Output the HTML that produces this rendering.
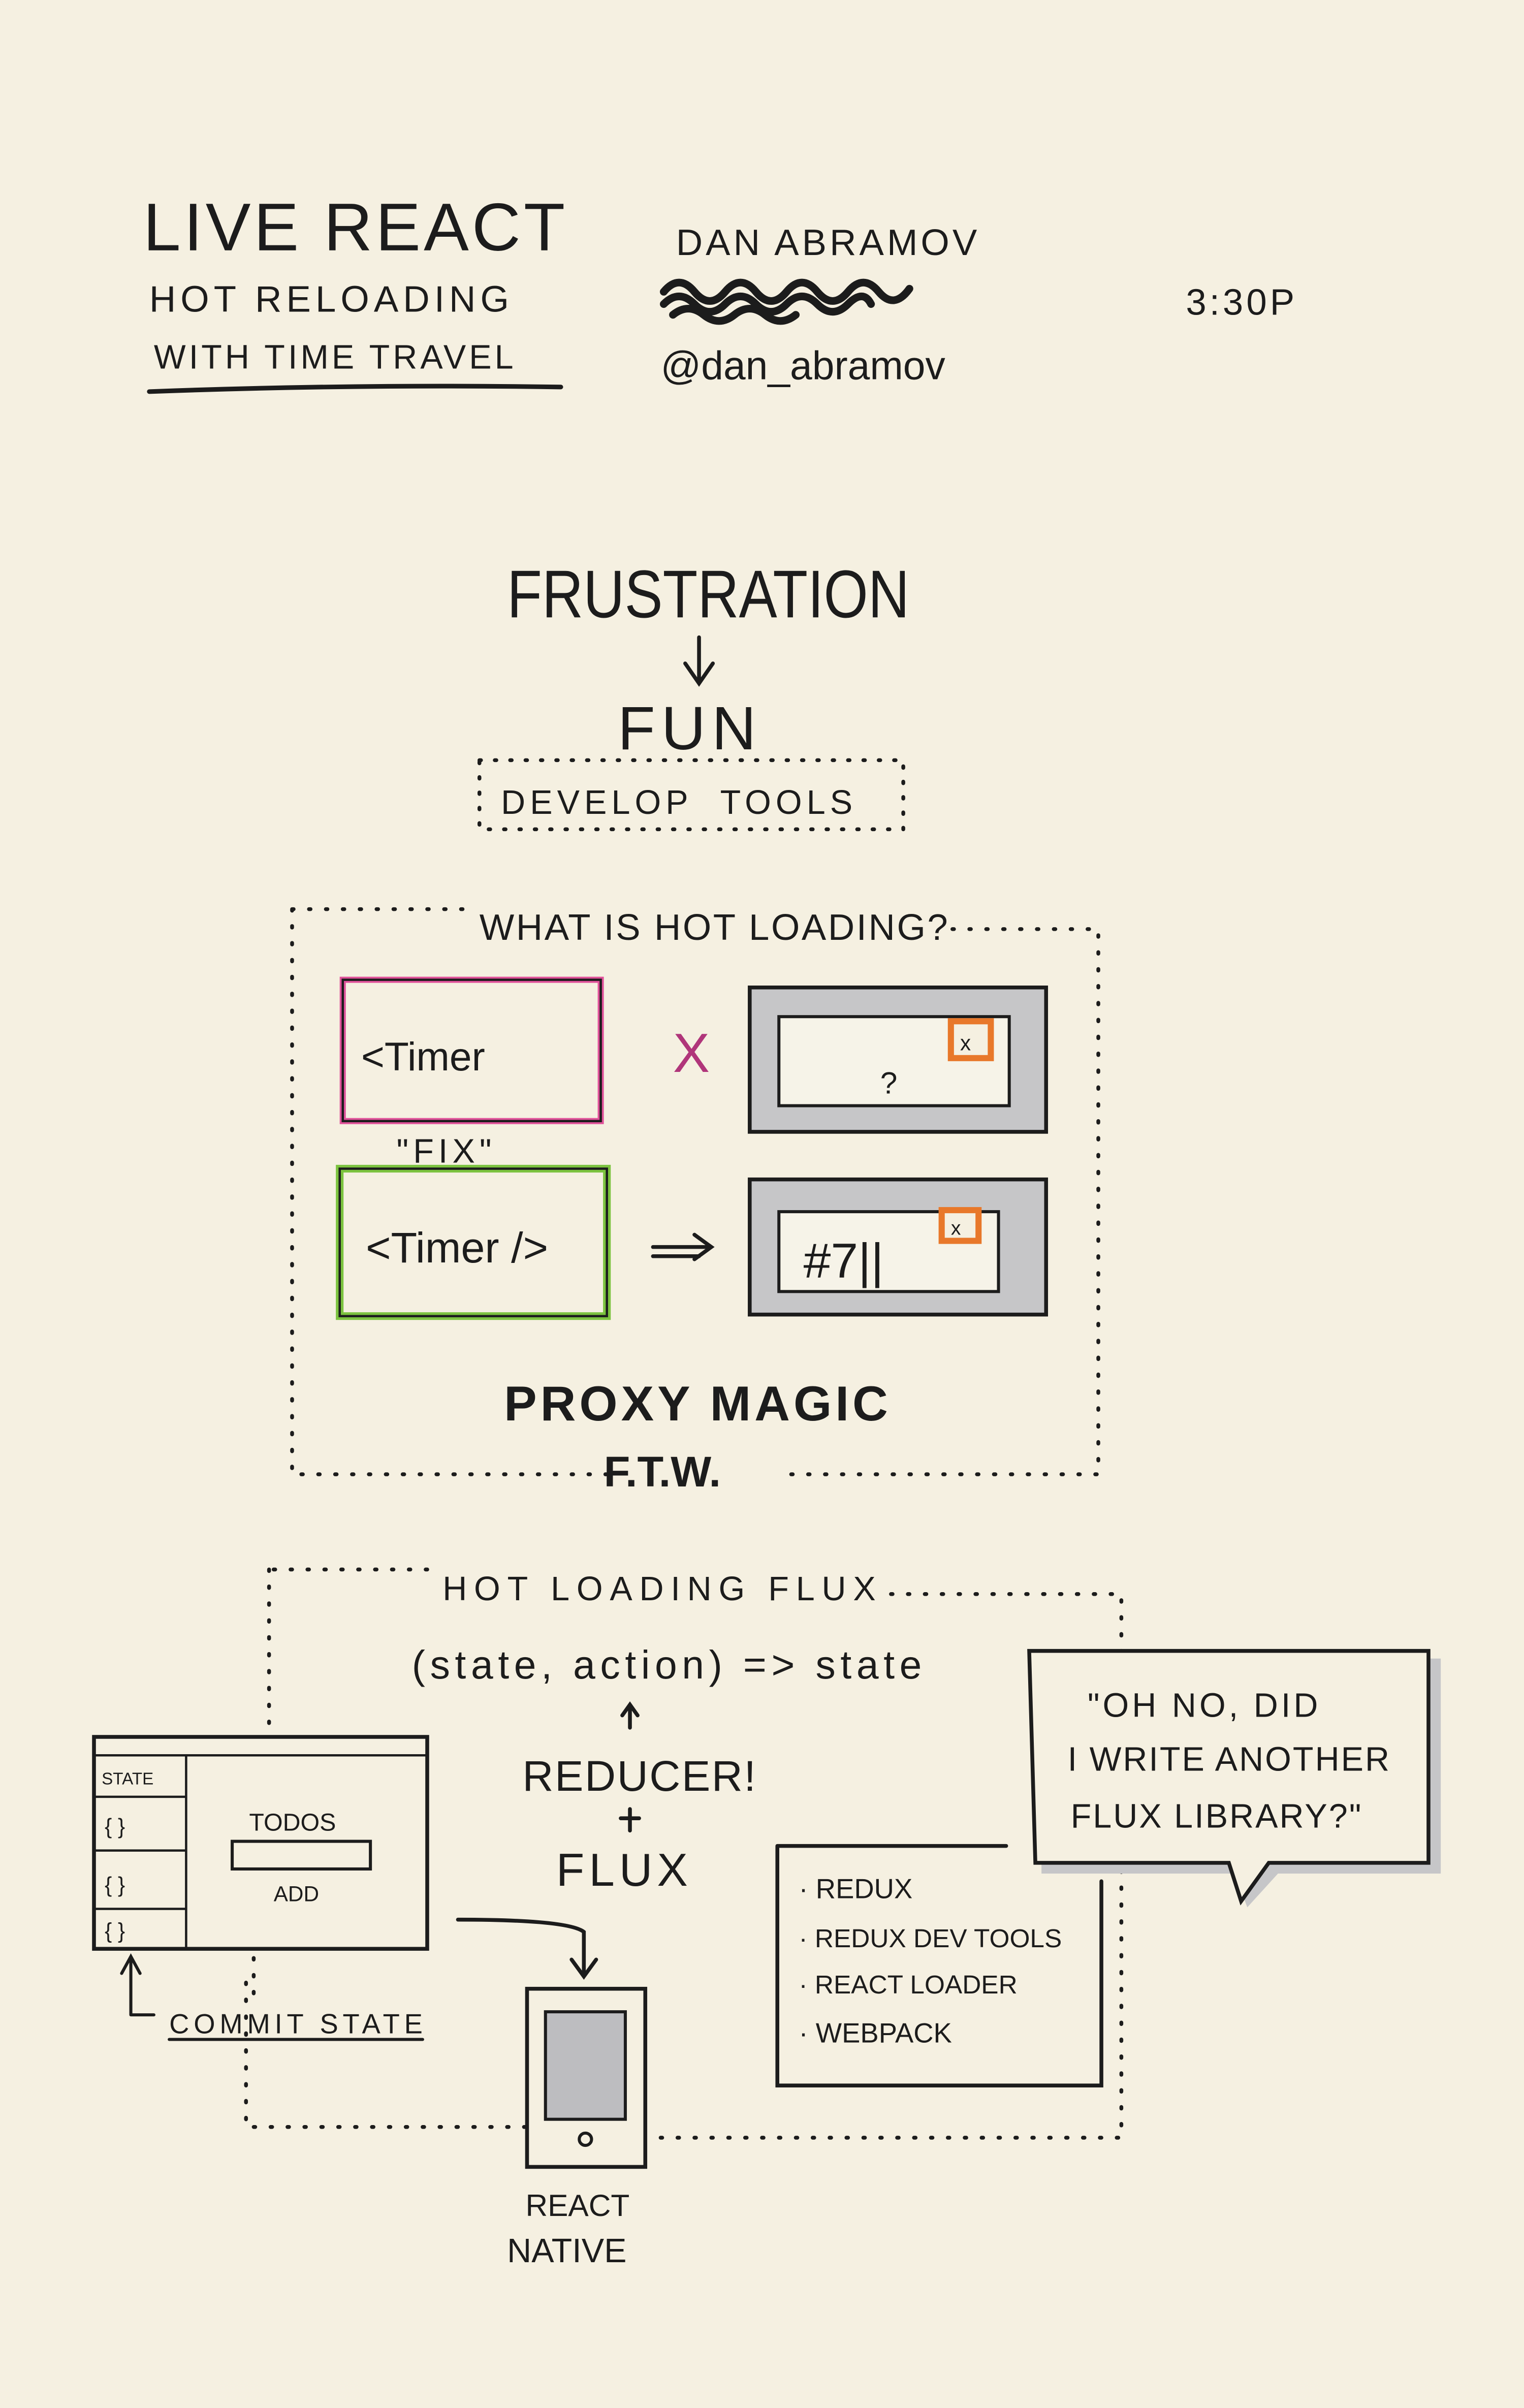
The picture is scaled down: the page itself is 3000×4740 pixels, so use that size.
<!DOCTYPE html>
<html><head><meta charset="utf-8"><style>
html,body{margin:0;padding:0;background:#f5f0e1}
svg{display:block}
text{font-family:"Liberation Sans",sans-serif;fill:#1c1c1c}
</style></head><body>
<svg width="3000" height="4740" viewBox="0 0 992 1568" xmlns="http://www.w3.org/2000/svg">
<rect width="992" height="1568" fill="#f5f0e1"/>
<g stroke="#1c1c1c" fill="none" stroke-linecap="round">
<path d="M97 255 Q230 250 365 252" stroke-width="3"/>
<path d="M432 190 q10 -12 20 0 t20 0 t20 0 t20 0 t20 0 t20 0 t20 0 t20 -2 M432 198 q10 -10 20 0 t20 0 t20 0 t20 0 t20 0 t20 0 t15 0 M438 205 q10 -8 20 0 t20 0 t20 0 t20 0" stroke-width="5"/>
<path d="M455 415 V443 M446 432 L455 445 L464 432" stroke-width="2.5"/>
<rect x="312" y="495" width="276" height="45" stroke-width="2.5" stroke-dasharray="1 9"/>
<path d="M190 592 H305 M620 605 H715 V960 H510 M395 960 H190 V592" stroke-width="2.5" stroke-dasharray="1 10"/>
<path d="M178 1022 H285 M580 1038 H730 V1392 H420 M342 1385 H160 V1290 M175 1022 V1130" stroke-width="2.5" stroke-dasharray="1 10"/>
<path d="M165 1275 V1300" stroke-width="2.5" stroke-dasharray="1 10"/>
</g>
<rect x="223" y="638" width="168" height="92" fill="none" stroke="#e0529a" stroke-width="4"/>
<rect x="223" y="638" width="168" height="92" fill="none" stroke="#1c1c1c" stroke-width="1.5"/>
<rect x="221" y="761" width="174" height="96" fill="none" stroke="#7cc33f" stroke-width="5"/>
<rect x="221" y="761" width="174" height="96" fill="none" stroke="#1c1c1c" stroke-width="1.5"/>
<rect x="488" y="643" width="193" height="94" fill="#c6c6c8" stroke="#1c1c1c" stroke-width="2.5"/>
<rect x="507" y="662" width="150" height="58" fill="#f6f3e8" stroke="#1c1c1c" stroke-width="2"/>
<rect x="619" y="665" width="26" height="24" fill="#f5f0e1" stroke="#e8782a" stroke-width="4"/>
<rect x="488" y="768" width="193" height="88" fill="#c6c6c8" stroke="#1c1c1c" stroke-width="2.5"/>
<rect x="507" y="789" width="143" height="52" fill="#f6f3e8" stroke="#1c1c1c" stroke-width="2"/>
<rect x="613" y="788" width="24" height="20" fill="#f5f0e1" stroke="#e8782a" stroke-width="4"/>
<text x="625" y="684" font-size="14">x</text>
<text x="619" y="804" font-size="13">x</text>
<text x="573" y="712" font-size="20">?</text>
<text x="523" y="832" font-size="32">#7||</text>
<text x="438" y="698" font-size="36" style="fill:#b0357a">X</text>
<g stroke="#1c1c1c" fill="none" stroke-width="2.5" stroke-linecap="round">
<path d="M425 812 H462 M452 804 L463 812 L452 820 M425 818 H455"/>
<rect x="61" y="1131" width="217" height="138"/>
<path d="M61 1143 H278 M121 1143 V1269 M61 1170 H121 M61 1205 H121 M61 1243 H121" stroke-width="1.5"/>
<rect x="151" y="1199" width="90" height="18" stroke-width="2"/>
<path d="M298 1250 Q370 1250 380 1258 V1285 M372 1276 L380 1287 L388 1276"/>
<path d="M85 1312 V1275 M79 1285 L85 1274 L91 1285 M85 1312 H100" stroke-width="2"/>
<path d="M110 1328 H275" stroke-width="2"/>
<rect x="343" y="1295" width="77" height="116"/>
<path d="M410 1178 L410 1192 M404 1184 H416"/>
<path d="M410 1125 V1110 M405 1117 L410 1110 L415 1117"/>
<path d="M506 1202 H655 M717 1225 V1358 H506 V1202" />
</g>
<rect x="355" y="1310" width="52" height="70" fill="#bdbdc0" stroke="#1c1c1c" stroke-width="2"/>
<circle cx="381" cy="1393" r="4" fill="none" stroke="#1c1c1c" stroke-width="2"/>
<path d="M678 1080 H938 V1220 H832 L812 1242 L804 1220 H678 Z" fill="#c6c6c8"/>
<path d="M670 1075 H930 V1213 H826 L808 1238 L800 1213 H674 Z" fill="#f5f0e1" stroke="#1c1c1c" stroke-width="2.5"/>
<text x="93" y="163" font-size="44" letter-spacing="2">LIVE REACT</text>
<text x="97" y="203" font-size="24" letter-spacing="3">HOT RELOADING</text>
<text x="100" y="240" font-size="22" letter-spacing="2">WITH TIME TRAVEL</text>
<text x="440" y="166" font-size="24" letter-spacing="2">DAN ABRAMOV</text>
<text x="430" y="247" font-size="26">@dan_abramov</text>
<text x="772" y="205" font-size="24" letter-spacing="2">3:30P</text>
<text x="330" y="402" font-size="44" textLength="262" lengthAdjust="spacingAndGlyphs">FRUSTRATION</text>
<text x="402" y="488" font-size="40" letter-spacing="4">FUN</text>
<text x="326" y="530" font-size="22" letter-spacing="3">DEVELOP &#160;TOOLS</text>
<text x="312" y="612" font-size="24" textLength="305">WHAT IS HOT LOADING?</text>
<text x="235" y="697" font-size="26">&lt;Timer</text>
<text x="258" y="757" font-size="22" letter-spacing="3">"FIX"</text>
<text x="238" y="822" font-size="28">&lt;Timer /&gt;</text>
<text x="328" y="925" font-size="32" font-weight="bold" textLength="250">PROXY MAGIC</text>
<text x="393" y="968" font-size="28" font-weight="bold">F.T.W.</text>
<text x="288" y="1042" font-size="22" textLength="282">HOT LOADING FLUX</text>
<text x="268" y="1093" font-size="26" textLength="332">(state, action) =&gt; state</text>
<text x="340" y="1166" font-size="28" textLength="152">REDUCER!</text>
<text x="362" y="1228" font-size="30" letter-spacing="3">FLUX</text>
<text x="66" y="1162" font-size="11">STATE</text>
<text x="68" y="1194" font-size="14">{ }</text>
<text x="68" y="1232" font-size="14">{ }</text>
<text x="68" y="1262" font-size="14">{ }</text>
<text x="162" y="1192" font-size="16">TODOS</text>
<text x="178" y="1238" font-size="14">ADD</text>
<text x="110" y="1324" font-size="18" textLength="165">COMMIT STATE</text>
<text x="342" y="1443" font-size="20">REACT</text>
<text x="330" y="1473" font-size="22">NATIVE</text>
<text x="520" y="1236" font-size="18">· REDUX</text>
<text x="520" y="1268" font-size="17">· REDUX DEV TOOLS</text>
<text x="520" y="1298" font-size="17">· REACT LOADER</text>
<text x="520" y="1330" font-size="18">· WEBPACK</text>
<text x="708" y="1118" font-size="22" letter-spacing="2">"OH NO, DID</text>
<text x="695" y="1153" font-size="22" letter-spacing="1">I WRITE ANOTHER</text>
<text x="697" y="1190" font-size="22" letter-spacing="1">FLUX LIBRARY?"</text>
</svg>
</body></html>
